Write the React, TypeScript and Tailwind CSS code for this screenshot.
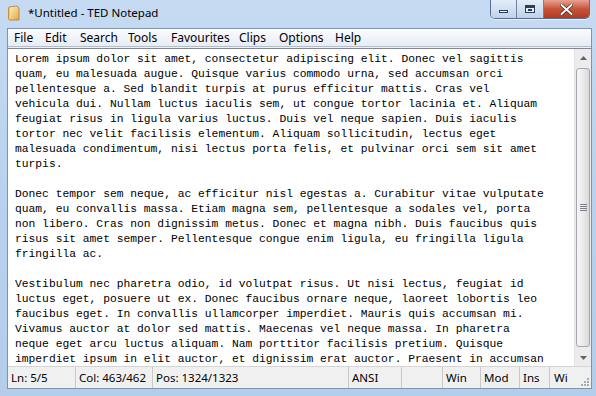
import React from 'react';

const LINES = [
  'Lorem ipsum dolor sit amet, consectetur adipiscing elit. Donec vel sagittis',
  'quam, eu malesuada augue. Quisque varius commodo urna, sed accumsan orci',
  'pellentesque a. Sed blandit turpis at purus efficitur mattis. Cras vel',
  'vehicula dui. Nullam luctus iaculis sem, ut congue tortor lacinia et. Aliquam',
  'feugiat risus in ligula varius luctus. Duis vel neque sapien. Duis iaculis',
  'tortor nec velit facilisis elementum. Aliquam sollicitudin, lectus eget',
  'malesuada condimentum, nisi lectus porta felis, et pulvinar orci sem sit amet',
  'turpis.',
  '',
  'Donec tempor sem neque, ac efficitur nisl egestas a. Curabitur vitae vulputate',
  'quam, eu convallis massa. Etiam magna sem, pellentesque a sodales vel, porta',
  'non libero. Cras non dignissim metus. Donec et magna nibh. Duis faucibus quis',
  'risus sit amet semper. Pellentesque congue enim ligula, eu fringilla ligula',
  'fringilla ac.',
  '',
  'Vestibulum nec pharetra odio, id volutpat risus. Ut nisi lectus, feugiat id',
  'luctus eget, posuere ut ex. Donec faucibus ornare neque, laoreet lobortis leo',
  'faucibus eget. In convallis ullamcorper imperdiet. Mauris quis accumsan mi.',
  'Vivamus auctor at dolor sed mattis. Maecenas vel neque massa. In pharetra',
  'neque eget arcu luctus aliquam. Nam porttitor facilisis pretium. Quisque',
  'imperdiet ipsum in elit auctor, et dignissim erat auctor. Praesent in accumsan',
];

const MENU = [
  { label: 'File', w: 'w-[31px]' },
  { label: 'Edit', w: 'w-[35px]' },
  { label: 'Search', w: 'w-[48px]' },
  { label: 'Tools', w: 'w-[43px]' },
  { label: 'Favourites', w: 'w-[68px]' },
  { label: 'Clips', w: 'w-[40px]' },
  { label: 'Options', w: 'w-[56px]' },
  { label: 'Help', w: 'w-[40px]' },
];

const STATUS = [
  { label: 'Ln: 5/5', w: 'w-[68px]' },
  { label: 'Col: 463/462', w: 'w-[77px]' },
  { label: 'Pos: 1324/1323', w: 'w-[196px]' },
  { label: 'ANSI', w: 'w-[53px]' },
  { label: '', w: 'w-[41px]' },
  { label: 'Win', w: 'w-[38px]' },
  { label: 'Mod', w: 'w-[39px]' },
  { label: 'Ins', w: 'w-[30px]' },
];

const ui = { fontFamily: '"Segoe UI", "Noto Sans", Arial, sans-serif' };

function AppIcon() {
  return (
    <svg width="14" height="16" viewBox="0 0 14 16">
      <defs>
        <linearGradient id="pg" x1="0" y1="0" x2="1" y2="1">
          <stop offset="0" stopColor="#fff3c4" />
          <stop offset="1" stopColor="#e0a94a" />
        </linearGradient>
      </defs>
      <path d="M2 2 L10 1 L12 3 L12 15 L3 15 Q1.5 15 1.5 13.5 Z" fill="url(#pg)" stroke="#b47a28" strokeWidth="0.8" />
      <path d="M2.5 2.5 Q1 3 1.5 5 L1.5 13.5" fill="none" stroke="#c98a2f" strokeWidth="0.8" />
    </svg>
  );
}

export default function App() {
  return (
    <div className="w-[596px] h-[396px] overflow-hidden flex flex-col bg-gradient-to-b from-[#c6dbf2] via-[#b9d1ee] to-[#b3cdeb]" style={ui}>
      {/* Title bar */}
      <div className="h-[28px] flex items-start justify-between shrink-0">
        <div className="flex items-center gap-[7px] pl-[7px] pt-[5px]">
          <AppIcon />
          <span className="text-[11.5px] text-black leading-none">*Untitled - TED Notepad</span>
        </div>
        <div className="flex mr-[6px] h-[19px] rounded-b-[5px] border border-t-0 border-[#5a6e8c] overflow-hidden shadow-[0_1px_0_rgba(255,255,255,0.6)]">
          <div className="w-[26px] flex items-center justify-center bg-gradient-to-b from-[#e4edf8] to-[#bfd2ea] border-r border-[#6f83a0]">
            <div className="w-[9px] h-[3px] mt-[5px] bg-white border border-[#2c3e5a]" />
          </div>
          <div className="w-[27px] flex items-center justify-center bg-gradient-to-b from-[#e4edf8] to-[#bfd2ea] border-r border-[#6f83a0]">
            <div className="w-[10px] h-[8px] border border-t-[3px] border-[#2c3e5a] bg-[#e8eef7] flex items-center justify-center">
              <div className="w-[4px] h-[2px] border border-[#2c3e5a]" />
            </div>
          </div>
          <div className="w-[45px] flex items-center justify-center bg-gradient-to-b from-[#e8a190] via-[#c7523a] to-[#b13b21]">
            <svg width="13" height="11" viewBox="0 0 13 11">
              <path d="M1.5 1 L11.5 10 M11.5 1 L1.5 10" stroke="#3b1b14" strokeWidth="3.2" strokeLinecap="round" />
              <path d="M1.5 1 L11.5 10 M11.5 1 L1.5 10" stroke="#ffffff" strokeWidth="2" strokeLinecap="round" />
            </svg>
          </div>
        </div>
      </div>

      {/* Client area */}
      <div className="flex-1 flex flex-col ml-[7px] mr-[4px] mb-[7px] border border-[#7f93ad] bg-[#f0f0f0] min-h-0">
        {/* Menu bar */}
        <div className="h-[18px] flex items-center pl-[6px] bg-gradient-to-b from-[#fbfcfe] to-[#e7ecf5] border-b border-[#b6bcc6] text-[12px] text-black shrink-0">
          {MENU.map(m => (
            <span key={m.label} className={`${m.w} shrink-0`}>{m.label}</span>
          ))}
        </div>

        {/* Editor */}
        <div className="flex-1 flex min-h-0 bg-white border-t border-[#828790] mt-[1px]">
          <div
            className="flex-1 pl-[7px] pt-[3px] text-[11.3px] leading-[15px] text-black whitespace-pre overflow-hidden"
            style={{ fontFamily: '"Liberation Mono", "Courier New", monospace' }}
          >
            {LINES.map((l, i) => (
              <div key={i} className="h-[15px]">{l}</div>
            ))}
          </div>
          {/* Scrollbar */}
          <div className="w-[17px] flex flex-col bg-[#ececed] border-l border-[#e3e3e3] shrink-0">
            <div className="h-[17px] flex items-center justify-center">
              <svg width="7" height="4" viewBox="0 0 7 4"><path d="M0 4 L3.5 0 L7 4 Z" fill="#5f6570" /></svg>
            </div>
            <div className="flex-1 mx-[1px] my-[2px] rounded-[3px] border border-[#a4a7ad] bg-gradient-to-r from-[#f6f6f6] via-[#ebebeb] to-[#d9d9d9] flex items-center justify-center">
              <div className="flex flex-col gap-[1px]">
                <div className="w-[7px] h-[1px] bg-[#7d8087]" />
                <div className="w-[7px] h-[1px] bg-[#7d8087]" />
                <div className="w-[7px] h-[1px] bg-[#7d8087]" />
                <div className="w-[7px] h-[1px] bg-[#7d8087]" />
              </div>
            </div>
            <div className="h-[17px] flex items-center justify-center">
              <svg width="7" height="4" viewBox="0 0 7 4"><path d="M0 0 L3.5 4 L7 0 Z" fill="#5f6570" /></svg>
            </div>
          </div>
        </div>

        {/* Status bar */}
        <div className="h-[22px] flex items-center bg-[#f0f0f0] border-t border-[#d5d5d5] text-[11.5px] text-black shrink-0">
          {STATUS.map((s, i) => (
            <div key={i} className={`${s.w} h-full flex items-center pl-[3px] border-r border-[#c9c9c9] shrink-0`}>
              {s.label}
            </div>
          ))}
          <div className="flex-1 h-full flex items-center pl-[4px] relative overflow-hidden">
            Wi
            <div className="absolute right-[2px] bottom-[2px] grid grid-cols-3 gap-[1px]">
              {[0, 0, 1, 0, 1, 1, 1, 1, 1].map((v, i) => (
                <div key={i} className={v ? 'w-[2px] h-[2px] bg-[#a9abaf]' : 'w-[2px] h-[2px]'} />
              ))}
            </div>
          </div>
        </div>
      </div>
    </div>
  );
}
